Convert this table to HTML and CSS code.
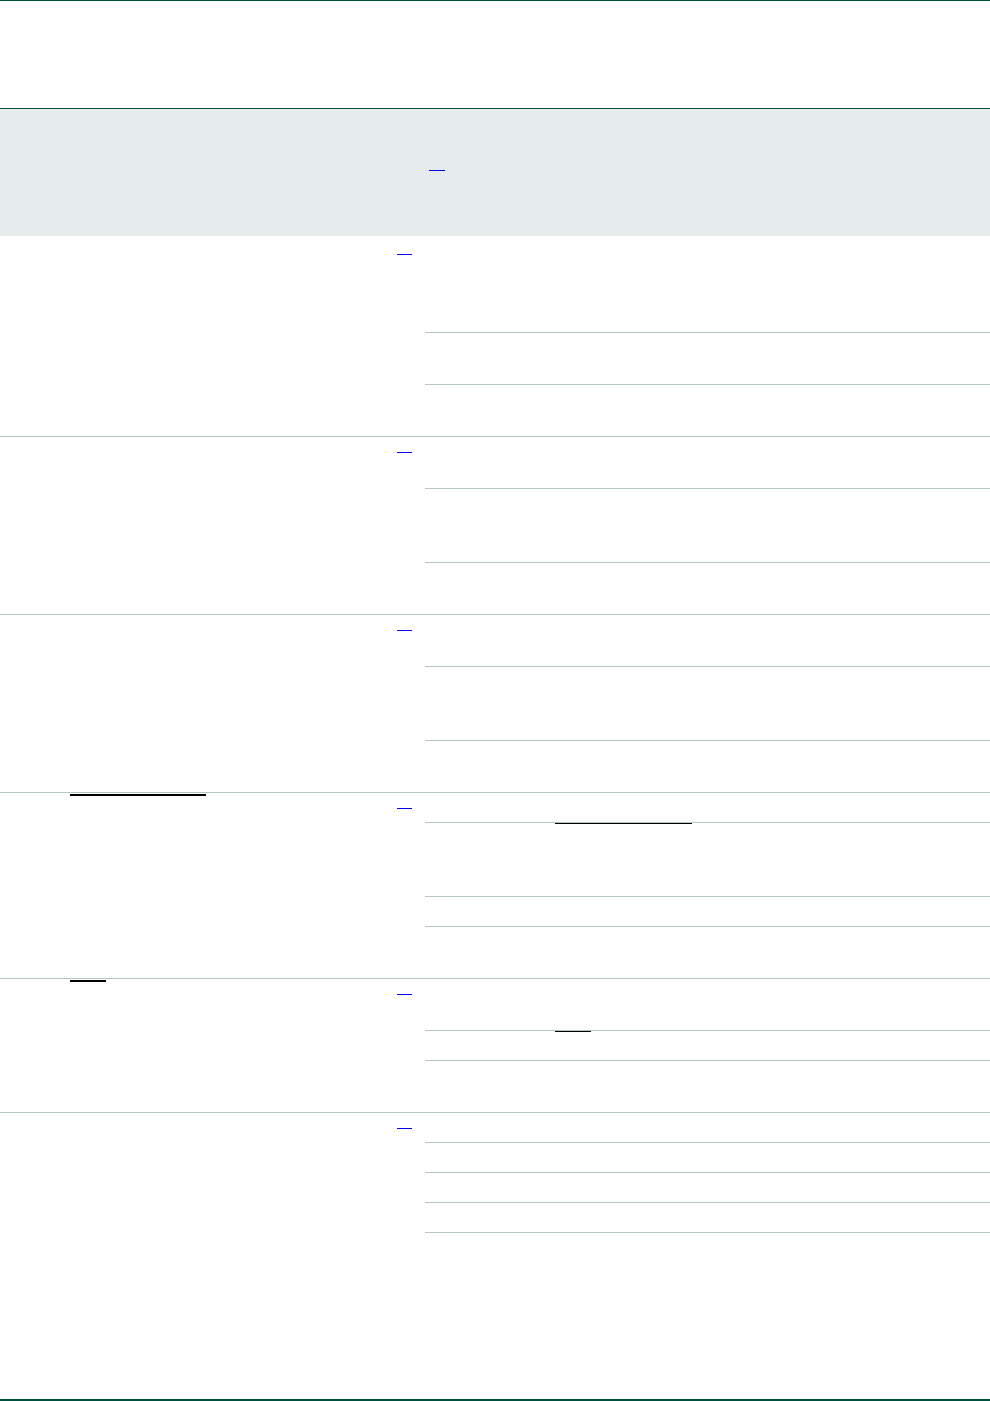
FILE: index.html
```html
<!DOCTYPE html>
<html lang="en">
<head>
<meta charset="utf-8">
<title>Table</title>
<link rel="stylesheet" href="styles.css">
</head>
<body>
<div class="page">
  <header class="title"></header>
  <div class="thead">
    <div class="th"></div>
    <div class="th th-ref"><span class="ref ref-head"></span></div>
  </div>
  <div class="tbody">
    <div class="row">
      <div class="lbl"></div>
      <div class="refcell first"><span class="ref"></span></div>
      <div class="subs">
        <div class="sub h4"></div>
        <div class="sub h2"></div>
        <div class="sub h2"></div>
      </div>
    </div>
    <div class="row">
      <div class="lbl"></div>
      <div class="refcell"><span class="ref"></span></div>
      <div class="subs">
        <div class="sub h2"></div>
        <div class="sub h3"></div>
        <div class="sub h2"></div>
      </div>
    </div>
    <div class="row">
      <div class="lbl"></div>
      <div class="refcell"><span class="ref"></span></div>
      <div class="subs">
        <div class="sub h2"></div>
        <div class="sub h3"></div>
        <div class="sub h2"></div>
      </div>
    </div>
    <div class="row">
      <div class="lbl"><span class="mark mark-long"></span></div>
      <div class="refcell"><span class="ref"></span></div>
      <div class="subs">
        <div class="sub h1"></div>
        <div class="sub h3"><span class="submark submark-long"></span></div>
        <div class="sub h1"></div>
        <div class="sub h2"></div>
      </div>
    </div>
    <div class="row">
      <div class="lbl"><span class="mark mark-short"></span></div>
      <div class="refcell"><span class="ref"></span></div>
      <div class="subs">
        <div class="sub h2"></div>
        <div class="sub h1"><span class="submark submark-short"></span></div>
        <div class="sub h2"></div>
      </div>
    </div>
    <div class="row last">
      <div class="lbl"></div>
      <div class="refcell"><span class="ref"></span></div>
      <div class="subs">
        <div class="sub h1"></div>
        <div class="sub h1"></div>
        <div class="sub h1"></div>
        <div class="sub h1"></div>
      </div>
    </div>
  </div>
</div>
</body>
</html>
```

FILE: styles.css
```css
html, body {
  margin: 0;
  padding: 0;
  background: #ffffff;
  font-family: "Liberation Sans", Arial, sans-serif;
  font-size: 14px;
  line-height: 22px;
  color: #000;
}

.page {
  width: 990px;
  height: 1401px;
  box-sizing: border-box;
  display: flex;
  flex-direction: column;
  border-top: 1px solid #00503e;
}

.title {
  height: 107px;
  flex: none;
  border-bottom: 1px solid #00503e;
}

.thead {
  height: 127px;
  flex: none;
  background: #e6ecec;
  display: grid;
  grid-template-columns: 429px 1fr;
}

.th-ref {
  padding-top: 61px;
}

.tbody {
  flex: 1;
  border-bottom: 2px solid #00503e;
}

.row {
  display: grid;
  grid-template-columns: 397px 28px 1fr;
  border-bottom: 1px solid #b2c8c1;
}

.row.last {
  border-bottom: 0;
}

.lbl {
  padding-top: 1px;
  padding-left: 70px;
}

.mark {
  display: block;
  height: 2px;
  background: #000;
}

.mark-long { width: 136px; }
.mark-short { width: 36px; }

.refcell {
  padding-top: 15px;
}

.refcell.first {
  padding-top: 18px;
}

.ref {
  display: block;
  width: 15px;
  height: 1px;
  background-color: #0000ff;
}

.ref-head {
  width: 16px;
}

.subs {
  display: flex;
  flex-direction: column;
}

.sub {
  border-bottom: 1px solid #b2c8c1;
}

.row .sub:last-child {
  border-bottom: 0;
}

.row.last .sub:last-child {
  border-bottom: 1px solid #b2c8c1;
}

.h1 { height: 29px; }
.h2 { height: 51px; }
.h3 { height: 73px; }
.h4 { height: 96px; }

.submark {
  display: block;
  margin-left: 130px;
  height: 1px;
  background: #000;
}

.submark-long { width: 137px; }
.submark-short { width: 36px; }
```
